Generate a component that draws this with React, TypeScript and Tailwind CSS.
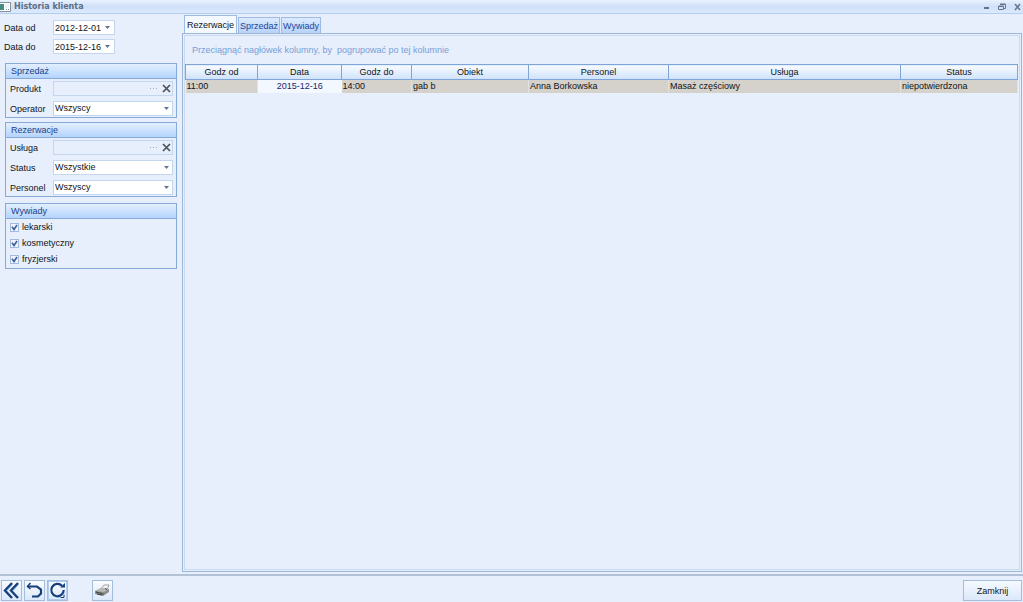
import React, { useState } from "react";

interface GroupProps {
  title: string;
  className?: string;
  children: React.ReactNode;
}

interface SelectRowProps {
  id: string;
  label: string;
  options: string[];
}

interface FieldProps {
  id: string;
  label: string;
}

const columns = [
  { name: "Godz od", width: "w-[72px]" },
  { name: "Data", width: "w-[84px]" },
  { name: "Godz do", width: "w-[70px]" },
  { name: "Obiekt", width: "w-[117px]" },
  { name: "Personel", width: "w-[140px]" },
  { name: "Usługa", width: "w-auto" },
  { name: "Status", width: "w-[117px]" },
];

const rows = [
  ["11:00", "2015-12-16", "14:00", "gab b", "Anna Borkowska", "Masaż częściowy", "niepotwierdzona"],
];

const tabs = ["Rezerwacje", "Sprzedaż", "Wywiady"];

const Arrow = () => (
  <svg width="5" height="3" viewBox="0 0 5 3" aria-hidden="true">
    <path d="M0 0h5L2.5 3z" fill="#5f7396" />
  </svg>
);

const Group: React.FC<GroupProps> = ({ title, className, children }) => (
  <section className={`border border-[#86a9d8] ${className ?? ""}`}>
    <h2 className="h-[15px] border-b border-[#86a9d8] bg-gradient-to-b from-[#e3efff] to-[#b4d4fc] pl-[5px] leading-[15px] text-[#1c3f86]">
      {title}
    </h2>
    {children}
  </section>
);

const DateRow: React.FC<FieldProps & { initial: string }> = ({ id, label, initial }) => {
  const [value, setValue] = useState(initial);
  return (
    <div className="flex h-[15px] items-center">
      <label htmlFor={id} className="w-[49px]">{label}</label>
      <div className="flex h-full w-[62px] items-center border border-[#c3d6ee] bg-white">
        <input
          id={id}
          type="text"
          className="w-[51px] pl-px outline-none"
          value={value}
          onChange={(e) => setValue(e.target.value)}
        />
        <button type="button" aria-label={`${label} - kalendarz`} className="flex h-full flex-1 items-center">
          <Arrow />
        </button>
      </div>
    </div>
  );
};

const SelectRow: React.FC<SelectRowProps> = ({ id, label, options }) => (
  <div className="flex h-[15px] items-center">
    <label htmlFor={id} className="w-[43px]">{label}</label>
    <div className="relative h-full flex-1">
      <select id={id} className="block h-full w-full appearance-none border border-[#c3d6ee] bg-white pl-px leading-[13px] outline-none">
        {options.map((o) => (
          <option key={o}>{o}</option>
        ))}
      </select>
      <span className="pointer-events-none absolute inset-y-0 right-1 flex items-center">
        <Arrow />
      </span>
    </div>
  </div>
);

const LookupRow: React.FC<FieldProps> = ({ id, label }) => {
  const [value, setValue] = useState("");
  return (
    <div className="flex h-[15px] items-center">
      <label htmlFor={id} className="w-[43px]">{label}</label>
      <div className="flex h-full flex-1 items-center border border-[#c3d6ee]">
        <input
          id={id}
          type="text"
          className="w-[96px] pl-px outline-none"
          value={value}
          onChange={(e) => setValue(e.target.value)}
        />
        <button type="button" aria-label={`Wybierz: ${label}`} className="flex h-full w-3 items-center">
          <svg width="8" height="2" viewBox="0 0 8 2" fill="#9fb0c8" aria-hidden="true">
            <path d="M0 0h1v1H0zM3 0h1v1H3zM6 0h1v1H6z" />
          </svg>
        </button>
        <button type="button" aria-label={`Wyczyść: ${label}`} onClick={() => setValue("")}>
          <svg width="9" height="9" viewBox="0 0 9 9" fill="none" stroke="#4c535c" strokeWidth="1.7" aria-hidden="true">
            <path d="M1 1l7 7M8 1L1 8" />
          </svg>
        </button>
      </div>
    </div>
  );
};

const CheckRow: React.FC<FieldProps> = ({ id, label }) => {
  const [checked, setChecked] = useState(true);
  return (
    <div className="flex items-center gap-[3px]">
      <span className="relative flex">
        <input
          id={id}
          type="checkbox"
          className="h-[9px] w-[9px] appearance-none border border-[#a3bbdc] bg-[#eef3fc]"
          checked={checked}
          onChange={() => setChecked(!checked)}
        />
        {checked && (
          <svg className="pointer-events-none absolute inset-0" width="9" height="9" viewBox="0 0 9 9" fill="none" stroke="#3f5f96" strokeWidth="1.6" aria-hidden="true">
            <path d="M2 3.8l2 2.7L7 2" />
          </svg>
        )}
      </span>
      <label htmlFor={id}>{label}</label>
    </div>
  );
};

const toolButton =
  "flex h-[21px] w-[21px] items-center justify-center border border-[#a3bddd] bg-gradient-to-b from-[#fafcff] to-[#dbe8fa]";

const App: React.FC = () => {
  const [tab, setTab] = useState("Rezerwacje");

  return (
    <div className="flex min-h-screen flex-col bg-[#e7eefc] font-['Liberation_Sans',Arial,sans-serif] text-[9px] leading-3 text-[#101418]">
      <header className="flex h-[14px] items-center border-b border-[#b4cdeb] bg-gradient-to-b from-[#e9f2ff] via-[#cfe0f8] to-[#dceaff]">
        <svg width="11" height="10" viewBox="0 0 11 10" aria-hidden="true">
          <path d="M0 .5h10.5v9H0" fill="#fff" stroke="#83919f" />
          <path d="M0 2h4v6H0z" fill="#468c86" />
          <path d="M5 2h4v4H5z" fill="#edf2f5" />
          <path d="M6 7h1v1H6zM8 7h1v1H8z" fill="#7a8794" />
        </svg>
        <h1 className="ml-[3px] flex-1 font-['DejaVu_Sans',Verdana,sans-serif] text-[8px] font-bold text-[#5e6e84]">
          Historia klienta
        </h1>
        <div className="flex items-center gap-2 pr-[2px]">
          <button type="button" aria-label="Minimalizuj">
            <svg width="7" height="8" viewBox="0 0 7 8" aria-hidden="true">
              <path d="M1 4h5v2H1z" fill="#66758c" />
            </svg>
          </button>
          <button type="button" aria-label="Przywróć">
            <svg width="8" height="8" viewBox="0 0 8 8" fill="none" stroke="#66758c" aria-hidden="true">
              <path d="M2 1.5h5.5v4H6M.5 3.5h5v3h-5zM2 1h5.5M.5 3h5" />
            </svg>
          </button>
          <button type="button" aria-label="Zamknij okno">
            <svg width="7" height="8" viewBox="0 0 7 8" fill="none" stroke="#66758c" strokeWidth="1.5" aria-hidden="true">
              <path d="M1 1l5 6M6 1L1 7" />
            </svg>
          </button>
        </div>
      </header>

      <div className="flex flex-1">
        <aside className="w-[177px] shrink-0 pt-[6px]">
          <div className="flex flex-col gap-1 pl-1">
            <DateRow id="od" label="Data od" initial="2012-12-01" />
            <DateRow id="do" label="Data do" initial="2015-12-16" />
          </div>
          <Group title="Sprzedaż" className="mt-[9px] ml-[5px]">
            <div className="flex flex-col gap-[5px] pt-[2px] pr-[3px] pb-px pl-1">
              <LookupRow id="produkt" label="Produkt" />
              <SelectRow id="operator" label="Operator" options={["Wszyscy"]} />
            </div>
          </Group>
          <Group title="Rezerwacje" className="mt-1 ml-[5px]">
            <div className="flex flex-col gap-[5px] pt-[2px] pr-[3px] pb-px pl-1">
              <LookupRow id="usluga" label="Usługa" />
              <SelectRow id="status" label="Status" options={["Wszystkie"]} />
              <SelectRow id="personel" label="Personel" options={["Wszyscy"]} />
            </div>
          </Group>
          <Group title="Wywiady" className="mt-[6px] ml-[5px]">
            <div className="flex flex-col gap-1 pt-[2px] pb-[3px] pl-1">
              <CheckRow id="lekarski" label="lekarski" />
              <CheckRow id="kosmetyczny" label="kosmetyczny" />
              <CheckRow id="fryzjerski" label="fryzjerski" />
            </div>
          </Group>
        </aside>

        <main className="ml-[5px] flex min-w-0 flex-1 flex-col pt-[2px] pr-px pb-[2px]">
          <div role="tablist" className="flex h-[17px] items-end pl-[2px]">
            {tabs.map((t) => (
              <button
                key={t}
                type="button"
                role="tab"
                aria-selected={t === tab}
                onClick={() => setTab(t)}
                className={
                  t === tab
                    ? "mr-px h-[18px] border border-b-0 border-[#9dbbe2] bg-[#f4f8ff] px-[2px]"
                    : "mr-px h-4 border border-b-0 border-[#9dbbe2] bg-gradient-to-b from-[#dceaff] to-[#b7d3fa] px-px text-[#1d4796]"
                }
              >
                {t}
              </button>
            ))}
          </div>
          <div className="flex-1 border border-[#9db6d6] p-px">
            <div className="h-full border border-[#c9daf1]">
              <p className="h-[28px] pt-2 pl-[7px] whitespace-pre text-[#79a0d6]">
                {"Przeciągnąć nagłówek kolumny, by  pogrupować po tej kolumnie"}
              </p>
              <div className="pr-px">
                <table className="w-full table-fixed border-collapse">
                  <thead>
                    <tr>
                      {columns.map((c) => (
                        <th
                          key={c.name}
                          className={`${c.width} h-[15px] border border-[#7fa5d8] bg-gradient-to-b from-[#f8fbff] to-[#cfe2fb] p-0 font-normal`}
                        >
                          {c.name}
                        </th>
                      ))}
                    </tr>
                  </thead>
                  <tbody>
                    {rows.map((row) => (
                      <tr key={row[0]}>
                        {row.map((cell, i) => (
                          <td
                            key={columns[i].name}
                            className={
                              i === 1
                                ? "h-[13px] bg-[#f3f8ff] p-0 text-center text-[#1b1f6e]"
                                : "h-[13px] border-r border-[#e2e0e0] bg-[#d5d1cb] p-0 pl-px"
                            }
                          >
                            {cell}
                          </td>
                        ))}
                      </tr>
                    ))}
                  </tbody>
                </table>
              </div>
            </div>
          </div>
        </main>
      </div>

      <footer className="flex h-[28px] items-center border-t-2 border-[#b3c1d6] px-px pt-[3px]">
        <div className="flex gap-[2px]">
          <button type="button" aria-label="Początek" className={toolButton}>
            <svg width="17" height="17" viewBox="0 0 17 17" fill="none" aria-hidden="true">
              <path d="M9 1L2 8.5L9 16M15 1L8 8.5L15 16" stroke="#173f7c" strokeWidth="2.4" />
              <path d="M9.5 2.5L4 8.5M15.5 2.5L10 8.5" stroke="#5f9bd8" strokeWidth="1" />
            </svg>
          </button>
          <button type="button" aria-label="Cofnij" className={toolButton}>
            <svg width="17" height="17" viewBox="0 0 17 17" fill="none" stroke="#173f7c" strokeWidth="2.2" aria-hidden="true">
              <path d="M1.500 4.500H11l4 3v4l-3 3H6" />
              <path d="M4.500 1L1.500 4.500L4.500 7" strokeWidth="1.500" />
            </svg>
          </button>
          <button type="button" aria-label="Odśwież" className={`${toolButton} shadow-[inset_0_0_0_1px_#b4cdec]`}>
            <svg width="17" height="17" viewBox="0 0 17 17" fill="none" stroke="#173f7c" aria-hidden="true">
              <path d="M13 3.800A6.200 6.200 0 1 0 14.700 8" strokeWidth="2.200" />
              <path d="M11 5.500H16V1z" fill="#173f7c" stroke="none" />
              <path d="M11.500 15.500H15V12.500" strokeWidth="1" />
            </svg>
          </button>
        </div>
        <button type="button" aria-label="Drukuj" className={`${toolButton} ml-6`}>
          <svg width="17" height="15" viewBox="0 0 17 15" aria-hidden="true">
            <path d="M7 6l3-4h5l-2 5z" fill="#f5f5f3" stroke="#8b8d8e" strokeWidth=".8" />
            <path d="M1 8l6-3 8 1v3l-6 4-8-2z" fill="#8b8d8b" />
            <path d="M1 8l6-3 8 1-5 3z" fill="#b9bab6" />
            <path d="M2 9l6 1.500M9 10.500V12M11 5.500l2 1M3 11l5 1" stroke="#3f4243" />
          </svg>
        </button>
        <button
          type="button"
          className="ml-auto h-[21px] w-[59px] border border-[#a3bddd] bg-gradient-to-b from-[#f6faff] to-[#dbe8fa]"
        >
          Zamknij
        </button>
      </footer>
    </div>
  );
};

export default App;
